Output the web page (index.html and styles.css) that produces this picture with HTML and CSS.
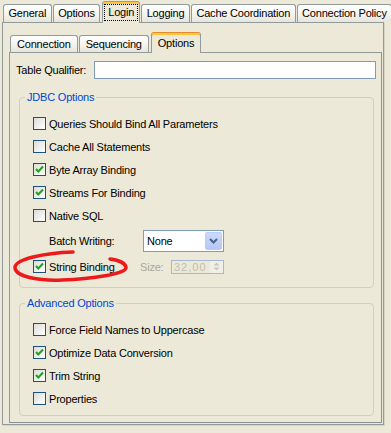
FILE: index.html
```html
<!DOCTYPE html>
<html>
<head>
  <link rel="stylesheet" href="styles.css">
</head>
<body>

<!-- top level tabs -->
<div class="tabs tabs-main">
  <div class="tab">General</div>
  <div class="tab">Options</div>
  <div class="tab active"><span class="focus">Login</span></div>
  <div class="tab">Logging</div>
  <div class="tab">Cache Coordination</div>
  <div class="tab">Connection Policy</div>
</div>

<div class="panel outer">
  <!-- login sub tabs -->
  <div class="tabs tabs-sub">
    <div class="tab">Connection</div>
    <div class="tab">Sequencing</div>
    <div class="tab active">Options</div>
  </div>

  <div class="panel inner">
    <div class="qualifier">
      <span class="qualifier-label">Table Qualifier:</span>
      <div class="textfield"></div>
    </div>

    <fieldset class="group group-jdbc">
      <legend>JDBC Options</legend>
      <div class="row"><span class="cb"></span><span>Queries Should Bind All Parameters</span></div>
      <div class="row"><span class="cb"></span><span>Cache All Statements</span></div>
      <div class="row"><span class="cb checked"><svg viewBox="0 0 11 11"><path d="M2 5 L4.3 7.5 L9 2.5"/></svg></span><span>Byte Array Binding</span></div>
      <div class="row"><span class="cb checked"><svg viewBox="0 0 11 11"><path d="M2 5 L4.3 7.5 L9 2.5"/></svg></span><span>Streams For Binding</span></div>
      <div class="row"><span class="cb"></span><span>Native SQL</span></div>
      <div class="row row-batch">
        <span class="batch-label">Batch Writing:</span>
        <div class="combo">
          <span class="combo-text">None</span>
          <span class="combo-btn"><svg viewBox="0 0 9 6"><path d="M1 1 L4.5 4.5 L8 1"/></svg></span>
        </div>
      </div>
      <div class="row">
        <span class="cb checked"><svg viewBox="0 0 11 11"><path d="M2 5 L4.3 7.5 L9 2.5"/></svg></span>
        <span class="string-label">String Binding</span>
        <span class="size-label">Size:</span>
        <div class="spinner">
          <span class="spinner-text">32,00</span>
          <span class="spinner-btns">
            <svg viewBox="0 0 7 4"><path d="M0.5 3.5 L3.5 0.5 L6.5 3.5Z"/></svg>
            <svg viewBox="0 0 7 4"><path d="M0.5 0.5 L3.5 3.5 L6.5 0.5Z"/></svg>
          </span>
        </div>
      </div>
    </fieldset>

    <fieldset class="group group-adv">
      <legend>Advanced Options</legend>
      <div class="row"><span class="cb"></span><span>Force Field Names to Uppercase</span></div>
      <div class="row"><span class="cb checked"><svg viewBox="0 0 11 11"><path d="M2 5 L4.3 7.5 L9 2.5"/></svg></span><span>Optimize Data Conversion</span></div>
      <div class="row"><span class="cb checked"><svg viewBox="0 0 11 11"><path d="M2 5 L4.3 7.5 L9 2.5"/></svg></span><span>Trim String</span></div>
      <div class="row"><span class="cb"></span><span>Properties</span></div>
    </fieldset>
  </div>
</div>

<!-- hand drawn mark over the string binding option -->
<svg class="annotation" viewBox="0 0 391 433">
  <path d="M73 252 C45 253, 14 259, 15 268 C16 277, 40 281, 62 280 C90 279, 128 274, 126 267 C125 263, 118 260, 110 259"/>
</svg>

</body>
</html>
```

FILE: styles.css
```css
* {
  box-sizing: border-box;
}
body {
  margin: 0;
  width: 391px;
  height: 433px;
  position: relative;
  background-color: #ECE9D8;
  font-family: "Liberation Sans", Arial, sans-serif;
  font-size: 11px;
  letter-spacing: -0.2px;
  color: #000;
  overflow: hidden;
}

/* tabs */
.tabs {
  display: flex;
  align-items: flex-end;
  gap: 1px;
  margin-bottom: -1px;
  position: relative;
  z-index: 1;
}
.tabs-main {
  padding: 1px 0 0 3px;
}
.tabs-sub {
  padding: 9px 0 0 1px;
}
.tab {
  height: 18px;
  margin-bottom: 1px;
  padding: 0 4.5px;
  line-height: 17px;
  border: 1px solid #919B9C;
  border-bottom: none;
  border-radius: 3px 3px 0 0;
  background: linear-gradient(#FFFFFF, #F3F2EC 60%, #E6E4DA);
  white-space: nowrap;
}
.tabs-sub .tab {
  height: 17px;
  padding: 0 6px;
  line-height: 16px;
}
.tab.active {
  height: 22px;
  margin: 0 0 0 1px;
  padding: 3px 2px 0;
  line-height: 17px;
  background: #ECE9D8;
  border-top: 1px solid #E68B2C;
  box-shadow: inset 0 2px 0 #FFC83C;
}
.tabs-sub .tab.active {
  height: 21px;
  padding: 2px 6px 0;
  line-height: 17px;
}
.focus {
  display: block;
  height: 15px;
  line-height: 14px;
  padding: 0 3px;
  outline: 1px dotted #000;
}

/* panels */
.panel {
  border: 1px solid #919B9C;
  background-color: #ECE9D8;
}
.outer {
  margin-left: 2px;
  width: 382px;
  height: 403px;
  padding: 0 1px 1px 6px;
  display: flex;
  flex-direction: column;
  box-shadow: 1px 1px 0 #D6D3C2;
}
.inner {
  flex: 1;
  padding: 8px 5px 0 6px;
  border-right-color: #8A9294;
  border-bottom-color: #8A9294;
}

.qualifier {
  display: flex;
  align-items: center;
  height: 18px;
}
.qualifier-label {
  width: 78px;
}
.textfield {
  flex: 1;
  height: 18px;
  background: #fff;
  border: 1px solid #7F9DB9;
}

/* option groups */
.group {
  margin: 12px 2px 0 3px;
  padding: 8px 0 9px 13px;
  border: 1px solid #D0D0BF;
  border-radius: 4px;
}
.group-adv {
  margin-top: 9px;
  padding-bottom: 5px;
}
.group legend {
  margin-left: -8px;
  padding: 0 2px;
  line-height: 13px;
  color: #0046D5;
}
.row {
  display: flex;
  align-items: center;
  gap: 3px;
  height: 23px;
}
.row-batch {
  margin: 2px 0 3px;
  padding-left: 16px;
}
.cb {
  width: 13px;
  height: 13px;
  border: 1px solid #1C5180;
  background: linear-gradient(135deg, #DCDCD7, #FFFFFF);
  display: flex;
  align-items: center;
  justify-content: center;
}
.cb svg {
  width: 11px;
  height: 11px;
}
.cb svg path {
  fill: none;
  stroke: #21A121;
  stroke-width: 2;
}

.batch-label {
  width: 91px;
}
.combo {
  width: 81px;
  height: 22px;
  border: 1px solid #7F9DB9;
  background: #fff;
  display: flex;
  align-items: center;
  padding: 1px;
}
.combo-text {
  flex: 1;
  padding-left: 2px;
}
.combo-btn {
  width: 17px;
  height: 18px;
  border: 1px solid #BCCDF4;
  border-radius: 2px;
  background: linear-gradient(#CCDAFC, #B4C8F6);
  display: flex;
  align-items: center;
  justify-content: center;
}
.combo-btn svg {
  width: 9px;
  height: 6px;
}
.combo-btn svg path {
  fill: none;
  stroke: #4D6185;
  stroke-width: 2;
}

.string-label {
  width: 88px;
}
.size-label {
  width: 28px;
  color: #ACA899;
}
.spinner {
  width: 53px;
  height: 14px;
  border: 1px solid #A5B9D5;
  display: flex;
  align-items: center;
}
.spinner-text {
  flex: 1;
  padding-left: 2px;
  color: #C2BFB2;
  letter-spacing: 1px;
  line-height: 12px;
}
.spinner-btns {
  width: 13px;
  height: 12px;
  background: #F0EFE8;
  display: flex;
  flex-direction: column;
  align-items: center;
  justify-content: center;
  gap: 1px;
}
.spinner-btns svg {
  width: 7px;
  height: 4px;
}
.spinner-btns svg path {
  fill: #C9C7BA;
}

/* red mark */
.annotation {
  position: absolute;
  left: 0;
  top: 0;
  width: 391px;
  height: 433px;
  pointer-events: none;
}
.annotation path {
  fill: none;
  stroke: #EC1A1A;
  stroke-width: 3.5;
  stroke-linecap: round;
}
```
